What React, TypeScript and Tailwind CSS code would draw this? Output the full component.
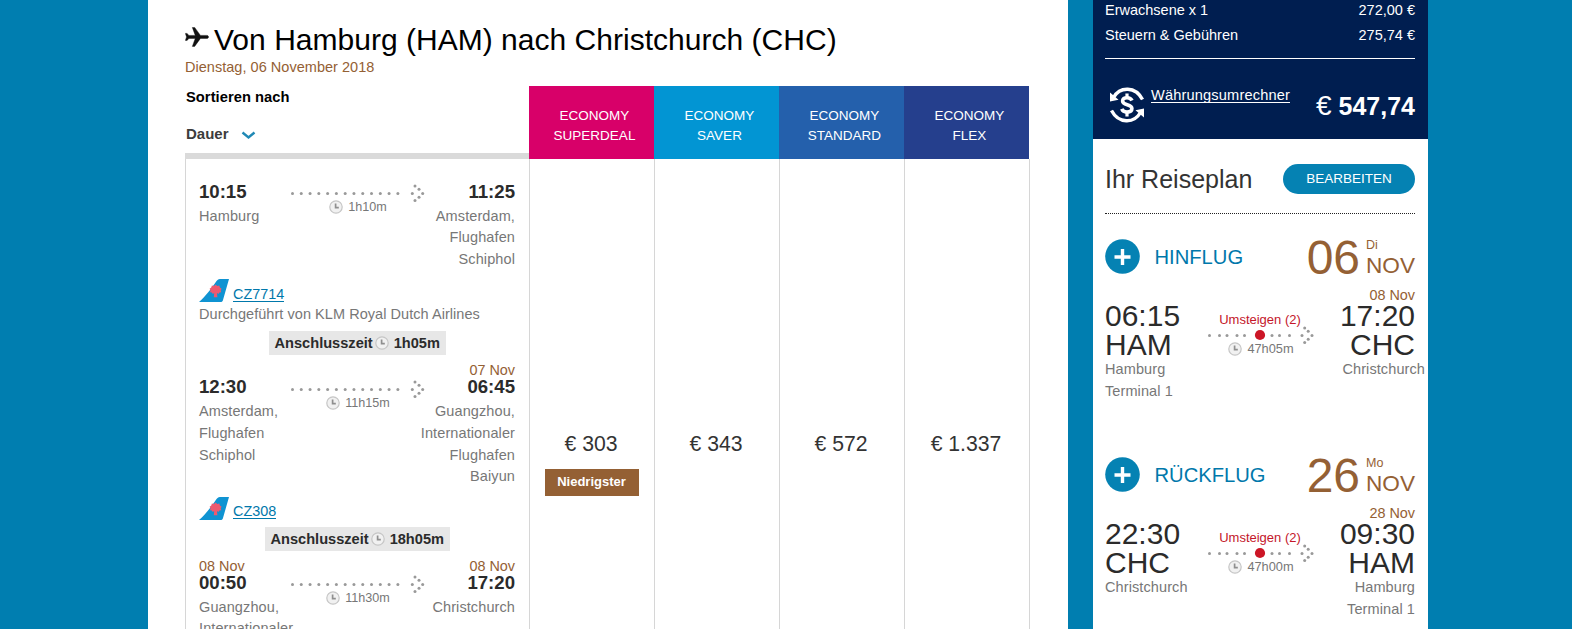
import React from "react";

type Segment = {
  depDate?: string;
  depTime: string;
  depPlace: string[];
  arrDate?: string;
  arrTime: string;
  arrPlace: string[];
  duration: string;
  flight?: string;
  operator?: string;
  layover?: string;
};

const segments: Segment[] = [
  {
    depTime: "10:15",
    depPlace: ["Hamburg"],
    arrTime: "11:25",
    arrPlace: ["Amsterdam,", "Flughafen", "Schiphol"],
    duration: "1h10m",
    flight: "CZ7714",
    operator: "Durchgeführt von KLM Royal Dutch Airlines",
    layover: "1h05m",
  },
  {
    depTime: "12:30",
    depPlace: ["Amsterdam,", "Flughafen", "Schiphol"],
    arrDate: "07 Nov",
    arrTime: "06:45",
    arrPlace: ["Guangzhou,", "Internationaler", "Flughafen", "Baiyun"],
    duration: "11h15m",
    flight: "CZ308",
    layover: "18h05m",
  },
  {
    depDate: "08 Nov",
    depTime: "00:50",
    depPlace: ["Guangzhou,", "Internationaler"],
    arrDate: "08 Nov",
    arrTime: "17:20",
    arrPlace: ["Christchurch"],
    duration: "11h30m",
  },
];

const fares = [
  { name: "SUPERDEAL", bg: "bg-[#d80069]", price: "303", lowest: true },
  { name: "SAVER", bg: "bg-[#0295d3]", price: "343" },
  { name: "STANDARD", bg: "bg-[#2460ac]", price: "572" },
  { name: "FLEX", bg: "bg-[#253f8d]", price: "1.337" },
];

const trips = [
  {
    title: "HINFLUG", day: "06", weekday: "Di", arrDate: "08 Nov",
    dep: "06:15", depCode: "HAM", depPlace: ["Hamburg", "Terminal 1"],
    arr: "17:20", arrCode: "CHC", arrPlace: ["Christchurch"], duration: "47h05m",
  },
  {
    title: "RÜCKFLUG", day: "26", weekday: "Mo", arrDate: "28 Nov",
    dep: "22:30", depCode: "CHC", depPlace: ["Christchurch"],
    arr: "09:30", arrCode: "HAM", arrPlace: ["Hamburg", "Terminal 1"], duration: "47h00m",
  },
];

function Clock() {
  return (
    <svg className="h-[14px] w-[14px] shrink-0" viewBox="0 0 14 14">
      <circle cx="7" cy="7" r="6.2" fill="#f1f1f1" stroke="#c6c6c6" strokeWidth="1.2" />
      <path d="M6.6 3.6v4.1h3.2" fill="none" stroke="#8f8f8f" strokeWidth="1.7" />
    </svg>
  );
}

function Dots({ points }: { points: number[][] }) {
  return (
    <g fill="#999">
      {points.map(([x, y]) => (
        <circle key={`${x}-${y}`} cx={x} cy={y} r="1.5" />
      ))}
    </g>
  );
}

const longLine = Array.from({ length: 13 }, (_, i) => [1.5 + i * 8.78, 9.4]).concat([
  [121.3, 9.4], [124, 2], [128, 5.3], [131.7, 9.4], [128, 13.2], [124, 16.5],
]);

const stopLine = [
  [4.5, 9.4], [14.5, 9.4], [22, 9.4], [32, 9.4], [39.5, 9.4],
  [67, 9.4], [74.5, 9.4], [84.5, 9.4],
  [97, 9.4], [99.7, 2], [103.2, 5.3], [107, 9.4], [103.2, 13.2], [99.7, 16.5],
];

function TailLogo() {
  return (
    <svg className="h-[23px] w-[30px]" viewBox="0 0 30 23">
      <path d="M0 23C6 18 12 10 16.5 3.500 18 1.200 19 0 21 0H30L24 21C23.600 22.500 23 23 21.500 23Z" fill="#0f93d2" />
      <path
        d="M14.800 18.300l.4-4.300-1.400.9-1-1.300-1.800-.4.500-1.900-.9-1.600 1.700-1.100.6-2.100 2.100.5 1.600-1.500 1.600 1.500 2.100-.5.600 2.100 1.700 1.100-.9 1.600.5 1.900-1.800.4-1 1.300-1.400-.9.4 4.300z"
        fill="#ee5a70"
      />
    </svg>
  );
}

function SegmentView({ s }: { s: Segment }) {
  return (
    <div>
      <div className="flex">
        <div className="flex w-[92px] flex-col items-start whitespace-nowrap">
          <div className="h-[14.4px] text-[14.4px] leading-4 text-[#946034]">{s.depDate}</div>
          <div className="pt-[0.8px] text-[18.6px] font-bold leading-5 text-[#2b2b2b]">{s.depTime}</div>
          <div className="mt-[4px] text-[14.5px] leading-[21.6px] tracking-[0.1px] text-[#777]">
            {s.depPlace.map((p) => <div key={p}>{p}</div>)}
          </div>
        </div>
        <div className="flex w-[134px] flex-col items-center">
          <svg className="mt-[17.4px] h-[18px] w-[134px] shrink-0" viewBox="0 0 134 18">
            <Dots points={longLine} />
          </svg>
          <div className="-mt-[2px] flex h-[14px] items-center gap-[5px] text-[12.6px] leading-[14px] text-[#777]">
            <Clock />
            {s.duration}
          </div>
        </div>
        <div className="flex w-[90px] flex-col items-end whitespace-nowrap text-right">
          <div className="h-[14.4px] text-[14.4px] leading-4 text-[#946034]">{s.arrDate}</div>
          <div className="pt-[0.8px] text-[18.6px] font-bold leading-5 text-[#2b2b2b]">{s.arrTime}</div>
          <div className="mt-[4px] text-[14.5px] leading-[21.6px] tracking-[0.1px] text-[#777]">
            {s.arrPlace.map((p) => <div key={p}>{p}</div>)}
          </div>
        </div>
      </div>
      {s.flight && (
        <div className="mt-[8.8px] flex h-[23px] items-start gap-[4px]">
          <TailLogo />
          <a className="mt-[5.5px] h-[17px] border-b border-[#0078ab] text-[14.4px] leading-[18px] text-[#0078ab]">
            {s.flight}
          </a>
        </div>
      )}
      {s.operator && (
        <div className="mt-[1.8px] whitespace-nowrap text-[14.5px] leading-5 tracking-[0.05px] text-[#777]">{s.operator}</div>
      )}
      {s.layover && (
        <div className="my-[7px] flex justify-center">
          <div className="flex h-6 items-center bg-[#e7e7e7] px-[6px] text-[14.6px] font-bold leading-6 text-[#2b2b2b]">
            Anschlusszeit
            <span className="ml-[2px] mr-[5px]"><Clock /></span>
            {s.layover}
          </div>
        </div>
      )}
    </div>
  );
}

function Results() {
  return (
    <main className="ml-[148px] w-[920px] shrink-0 bg-white pl-[37px]">
      <div className="flex h-[57px] pt-[22px]">
        <svg className="mt-[5px] h-5 w-6" viewBox="0 0 24 20" preserveAspectRatio="none">
          <path
            transform="translate(25.900 -1.600) scale(1.16 1) rotate(90)"
            d="M21 16v-2l-8-5V3.500c0-.83-.67-1.500-1.500-1.500S10 2.670 10 3.500V9l-8 5v2l8-2.500V19l-2 1.500V22l3.500-1 3.500 1v-1.500L13 19v-5.500l8 2.500z"
            fill="#111"
            stroke="#111"
            strokeWidth="0.400"
          />
        </svg>
        <h1 className="ml-[5px] whitespace-nowrap text-[30px] leading-9 tracking-[0.02px] text-black">
          Von Hamburg (HAM) nach Christchurch (CHC)
        </h1>
      </div>
      <div className="h-[29px] text-[14.5px] leading-5 tracking-[0.03px] text-[#946034]">Dienstag, 06 November 2018</div>
      <div className="flex h-[73px]">
        <div className="flex w-[344px] flex-col border-b-[6px] border-[#dadada]">
          <div className="pl-px pt-px text-[14.7px] font-bold leading-5 tracking-[0.05px] text-black">Sortieren nach</div>
          <div className="mt-[17px] flex items-center pl-px text-[15px] font-bold leading-5 text-[#3c3c3c]">
            Dauer
            <svg className="ml-[12.5px] mt-[3px] h-[9px] w-[15px]" viewBox="0 0 15 9">
              <path d="M1.500 1.500l6 5 6-5" fill="none" stroke="#2089b5" strokeWidth="2.400" />
            </svg>
          </div>
        </div>
        {fares.map((f) => (
          <div key={f.name} className={`w-[125px] pl-[6px] pt-[19.5px] text-center text-[13.5px] leading-5 text-white ${f.bg}`}>
            ECONOMY
            <br />
            {f.name}
          </div>
        ))}
      </div>
      <div className="flex h-[600px]">
        <div className="w-[345px] border-x border-[#d6d6d6] pl-[13px] pt-[7.6px]">
          <div className="w-[316.5px]">
            {segments.map((s) => <SegmentView key={s.depTime} s={s} />)}
          </div>
        </div>
        {fares.map((f) => (
          <div key={f.name} className="flex w-[125px] flex-col items-center border-r border-[#d6d6d6] pt-[271px]">
            <div className="pr-[2px] text-[21.2px] leading-7 text-[#333]">€ {f.price}</div>
            {f.lowest && (
              <div className="mt-[11px] h-[27px] w-[94px] bg-[#946034] pr-px text-center text-[13px] font-bold leading-[25px] text-white">
                Niedrigster
              </div>
            )}
          </div>
        ))}
      </div>
    </main>
  );
}

function CurrencyIcon() {
  return (
    <svg className="h-[36px] w-[36px]" viewBox="0 0 36 36">
      <g fill="none" stroke="#fff" strokeWidth="3.400">
        <path d="M4.500 10.500C11-.8 26.500-.8 33.500 12.500" />
        <path d="M31.500 25.500C25 36.800 9.500 36.800 2.500 23.500" />
      </g>
      <path d="M1 5.500V14.500L9.500 12.800Z" fill="#fff" />
      <path d="M35 30.500V21.500L26.500 23.200Z" fill="#fff" />
      <path
        d="M23 13.500C22 11.300 20.300 10.700 18 10.700c-2.700 0-4.400 1.200-4.400 3.200 0 5 9.300 2.600 9.300 7.700 0 2.300-2 3.500-4.900 3.500-2.600 0-4.400-1-5.200-3.200"
        fill="none"
        stroke="#fff"
        strokeWidth="3.600"
      />
      <path d="M18 6.500v4M18 25v4.500" stroke="#fff" strokeWidth="3.200" />
    </svg>
  );
}

function TripView({ t }: { t: (typeof trips)[number] }) {
  return (
    <section className="h-[218px]">
      <div className="flex h-[50px] items-center">
        <svg className="h-[35px] w-[35px]" viewBox="0 0 35 35">
          <circle cx="17.500" cy="17.500" r="17.300" fill="#0582b3" />
          <path d="M9.500 18h16M17.500 10v16" stroke="#fff" strokeWidth="3.400" />
        </svg>
        <div className="ml-[14.5px] pt-[1.5px] text-[20.2px] leading-6 text-[#0078ab]">{t.title}</div>
        <div className="ml-auto flex items-center pt-[3px] text-[#946034]">
          <div className="text-[48px] leading-[50px]">{t.day}</div>
          <div className="ml-[6px]">
            <div className="h-[15.5px] text-[12.5px] leading-4">{t.weekday}</div>
            <div className="mt-[1.5px] text-[22.6px] leading-6">NOV</div>
          </div>
        </div>
      </div>
      <div className="mt-[5.7px] flex">
        <div className="flex w-[100px] flex-col items-start whitespace-nowrap">
          <div className="mt-[13.7px] text-[30px] leading-[29px] text-[#2b2b2b]">
            <div>{t.dep}</div>
            <div>{t.depCode}</div>
          </div>
          <div className="pt-[0.8px] text-[14.5px] leading-[21.3px] tracking-[0.1px] text-[#777]">
            {t.depPlace.map((p) => <div key={p}>{p}</div>)}
          </div>
        </div>
        <div className="flex w-[110px] flex-col items-center pt-[25.3px]">
          <div className="whitespace-nowrap text-[13px] leading-4 text-[#c4162a]">Umsteigen (2)</div>
          <svg className="-mt-[2px] h-[18px] w-[110px]" viewBox="0 0 110 18">
            <Dots points={stopLine} />
            <circle cx="55" cy="9" r="5.100" fill="#cc1626" />
          </svg>
          <div className="-mt-[2.6px] ml-[2px] flex h-[14px] items-center gap-[5px] text-[12.8px] leading-[14px] text-[#777]">
            <Clock />
            {t.duration}
          </div>
        </div>
        <div className="flex w-[100px] flex-col items-end whitespace-nowrap text-right">
          <div className="h-[13.7px] text-[14.4px] leading-4 text-[#946034]">{t.arrDate}</div>
          <div className="text-[30px] leading-[29px] text-[#2b2b2b]">
            <div>{t.arr}</div>
            <div>{t.arrCode}</div>
          </div>
          <div className={`pt-[0.8px] text-[14.5px] leading-[21.3px] tracking-[0.1px] text-[#777] ${t.arrPlace.length === 1 ? "-mr-[10px]" : ""}`}>
            {t.arrPlace.map((p) => <div key={p}>{p}</div>)}
          </div>
        </div>
      </div>
    </section>
  );
}

function Sidebar() {
  return (
    <aside className="ml-[25px] w-[335px] shrink-0 bg-white">
      <div className="h-[139px] bg-[#001e50] pl-[12px] pr-[13px] text-[14.5px] text-white">
        <div className="flex h-[25px] justify-between leading-5">
          <span>Erwachsene x 1</span>
          <span>272,00 €</span>
        </div>
        <div className="flex h-[33px] justify-between leading-5">
          <span>Steuern &amp; Gebühren</span>
          <span>275,74 €</span>
        </div>
        <div className="flex border-t border-white pl-[4px]">
          <div className="mt-[28px]"><CurrencyIcon /></div>
          <a className="ml-[6px] mt-[27px] h-[17px] border-b border-white text-[14.6px] leading-[18px] tracking-[0.16px]">Währungsumrechner</a>
          <div className="ml-auto mt-[29px] flex items-baseline whitespace-nowrap leading-9">
            <span className="text-[28px]">€</span>
            <span className="ml-[7px] text-[25px] font-bold">547,74</span>
          </div>
        </div>
      </div>
      <div className="pl-[12px] pr-[13px]">
        <div className="flex h-[74px] items-center justify-between pt-[6px]">
          <h2 className="text-[25px] leading-8 text-[#333]">Ihr Reiseplan</h2>
          <button className="h-[30px] w-[132px] rounded-full bg-[#0582b3] text-[13.5px] leading-[30px] text-white">BEARBEITEN</button>
        </div>
        <div className="mb-[17.3px] border-t border-dotted border-[#222]" />
        {trips.map((t) => <TripView key={t.title} t={t} />)}
      </div>
    </aside>
  );
}

export default function App() {
  return (
    <div className="flex h-[629px] w-full overflow-hidden bg-[#007eb0] font-['Liberation_Sans',Arial,sans-serif]">
      <Results />
      <Sidebar />
    </div>
  );
}
